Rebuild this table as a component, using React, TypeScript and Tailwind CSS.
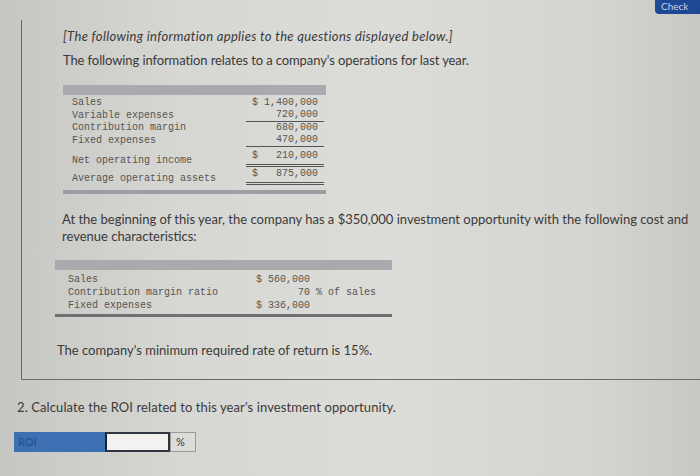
import React from 'react'

const mono = { fontFamily: '"Liberation Mono", "DejaVu Sans Mono", monospace' }

type Row = { label: string; sign?: string; value: string; line?: 'single' | 'double'; gap?: string }

export default function App() {
  const rows: Row[] = [
    { label: 'Sales', sign: '$', value: '1,400,000' },
    { label: 'Variable expenses', value: '720,000', line: 'single' },
    { label: 'Contribution margin', value: '680,000' },
    { label: 'Fixed expenses', value: '470,000', line: 'single' },
    { label: 'Net operating income', sign: '$', value: '210,000', line: 'double', gap: 'mt-[3px]' },
    { label: 'Average operating assets', sign: '$', value: '875,000', line: 'double', gap: 'mt-[1px]' },
  ]

  return (
    <div
      className="w-[700px] h-[476px] overflow-hidden relative bg-[linear-gradient(90deg,#c6c6c2_0%,#d6d6d2_25%,#dcdcd8_55%,#d4d4d0_85%,#c8c8c4_100%)] text-[#3a3a3a]"
      style={{ fontFamily: 'Lato, "Open Sans", sans-serif' }}
    >
      <div className="absolute right-0 top-0 w-[45px] h-[14px] bg-[#1e4796] rounded-bl-sm text-[#c9d3ea] text-[10px] leading-[12px] pl-[6px]">
        Check
      </div>

      <div className="ml-[21px] mt-[20px] h-[360px] border-l border-b border-[#6a6a6a] pl-[41px] pt-[8px]">
        <p className="italic text-[13px] leading-[16px] tracking-[0.33px]">
          [The following information applies to the questions displayed below.]
        </p>
        <p className="mt-[8px] text-[13px] leading-[16px] tracking-[-0.1px]">
          The following information relates to a company's operations for last year.
        </p>

        <div className="mt-[17px] w-[263px] text-[10px] text-[#555]" style={mono}>
          <div className="h-[10px] bg-[#a9a9ae]" />
          <div className="pt-[2px]">
            {rows.map((r) => (
              <div key={r.label} className={`flex items-end ${r.gap ?? ''}`}>
                <div className="flex-1 pl-[9px] leading-[12px]">{r.label}</div>
                <div
                  className={`w-[78px] mr-[2px] flex justify-between pl-[6px] pr-[6px] leading-[12px] ${
                    r.line === 'single'
                      ? 'border-b border-[#555]'
                      : r.line === 'double'
                        ? 'border-b-[3px] border-double border-[#555] pb-[2px]'
                        : ''
                  }`}
                >
                  <span>{r.sign ?? ''}</span>
                  <span>{r.value}</span>
                </div>
              </div>
            ))}
          </div>
          <div className="mt-[5px] h-[4px] bg-[#9d9da2]" />
        </div>

        <p className="mt-[17px] -ml-[1px] text-[13px] leading-[17px] pr-[4px]">
          At the beginning of this year, the company has a $350,000 investment opportunity with the following cost and
          revenue characteristics:
        </p>

        <div className="mt-[15px] -ml-[8px] w-[337px] text-[10px] text-[#555]" style={mono}>
          <div className="h-[10px] bg-[#a9a9ae]" />
          <div className="pt-[3px] leading-[13px]">
            <div className="flex">
              <div className="flex-1 pl-[13px]">Sales</div>
              <div className="w-[136px]">$ 560,000</div>
            </div>
            <div className="flex">
              <div className="flex-1 pl-[13px]">Contribution margin ratio</div>
              <div className="w-[136px] text-right pr-[16px]">70 % of sales</div>
            </div>
            <div className="flex">
              <div className="flex-1 pl-[13px]">Fixed expenses</div>
              <div className="w-[136px]">$ 336,000</div>
            </div>
          </div>
          <div className="mt-[2px] h-[3px] bg-[#6f6f74]" />
        </div>

        <p className="mt-[25px] -ml-[6px] text-[13px] leading-[16px]">
          The company's minimum required rate of return is 15%.
        </p>
      </div>

      <p className="mt-[19px] ml-[17px] text-[13px] leading-[16px] tracking-[0.1px]">
        2. Calculate the ROI related to this year's investment opportunity.
      </p>

      <div className="mt-[17px] ml-[14px] flex h-[20px]">
        <div className="w-[91px] bg-[#3d6fb3] text-[#24508c] text-[11px] leading-[20px] pl-[4px]">ROI</div>
        <div className="w-[65px] bg-[#f2f2f0] border-2 border-[#2e3440] border-l-[#1d2230]" />
        <div className="w-[26px] border border-[#9a9a9a] bg-[#dcdcd8] text-[11px] leading-[18px] pl-[5px]">%</div>
      </div>
    </div>
  )
}
